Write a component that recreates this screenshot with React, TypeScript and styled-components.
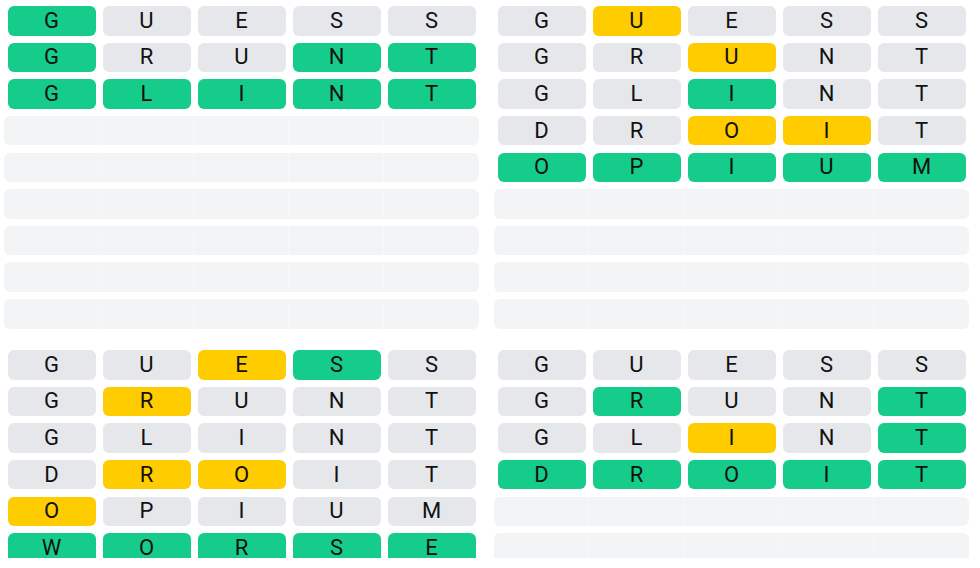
import React from "react";
import styled, { createGlobalStyle } from "styled-components";

const GlobalStyle = createGlobalStyle`
  html, body { margin: 0; padding: 0; background: #ffffff; }
  body { font-family: Roboto, "Noto Sans", Arial, sans-serif; }
`;

type State = "g" | "y" | "x";

const COLORS: Record<State, string> = {
  g: "#15cc8a",
  y: "#ffcc00",
  x: "#e5e7eb",
};

const Viewport = styled.div`
  height: 558px;
  overflow: hidden;
`;

const Boards = styled.div`
  display: grid;
  grid-template-columns: 475px 475px;
  column-gap: 15px;
  row-gap: 21.5px;
  padding: 6px 0 0 4px;
`;

const Board = styled.div`
  display: flex;
  flex-direction: column;
  gap: 7.125px;
`;

const Row = styled.div`
  display: grid;
  grid-template-columns: repeat(5, 95px);
  height: 29.5px;
`;

const Tile = styled.div<{ $state: State }>`
  margin: 0 3.5px;
  border-radius: 6px;
  background: ${(p) => COLORS[p.$state]};
  display: flex;
  align-items: center;
  justify-content: center;
  font-family: Roboto, "Noto Sans", Arial, sans-serif;
  font-size: 22px;
  font-weight: 400;
  color: #111111;
  line-height: 1;
`;

const EmptyRow = styled.div`
  display: grid;
  grid-template-columns: repeat(5, 1fr);
  height: 29.5px;
  border-radius: 6px;
  overflow: hidden;
  background: #f3f4f6;
`;

const EmptyCell = styled.div`
  &:not(:last-child) {
    border-right: 1px solid #f7f8f9;
  }
`;

type Guess = { word: string; states: string };

const boards: Guess[][] = [
  [
    { word: "GUESS", states: "gxxxx" },
    { word: "GRUNT", states: "gxxgg" },
    { word: "GLINT", states: "ggggg" },
  ],
  [
    { word: "GUESS", states: "xyxxx" },
    { word: "GRUNT", states: "xxyxx" },
    { word: "GLINT", states: "xxgxx" },
    { word: "DROIT", states: "xxyyx" },
    { word: "OPIUM", states: "ggggg" },
  ],
  [
    { word: "GUESS", states: "xxygx" },
    { word: "GRUNT", states: "xyxxx" },
    { word: "GLINT", states: "xxxxx" },
    { word: "DROIT", states: "xyyxx" },
    { word: "OPIUM", states: "yxxxx" },
    { word: "WORSE", states: "ggggg" },
  ],
  [
    { word: "GUESS", states: "xxxxx" },
    { word: "GRUNT", states: "xgxxg" },
    { word: "GLINT", states: "xxyxg" },
    { word: "DROIT", states: "ggggg" },
  ],
];

const TOTAL_ROWS = 9;

export default function App() {
  return (
    <>
      <GlobalStyle />
      <Viewport>
        <Boards>
          {boards.map((guesses, bi) => (
            <Board key={bi}>
              {guesses.map((g, ri) => (
                <Row key={ri}>
                  {g.word.split("").map((ch, ci) => (
                    <Tile key={ci} $state={g.states[ci] as State}>
                      {ch}
                    </Tile>
                  ))}
                </Row>
              ))}
              {Array.from({ length: TOTAL_ROWS - guesses.length }).map((_, ei) => (
                <EmptyRow key={`e${ei}`}>
                  {Array.from({ length: 5 }).map((__, ci) => (
                    <EmptyCell key={ci} />
                  ))}
                </EmptyRow>
              ))}
            </Board>
          ))}
        </Boards>
      </Viewport>
    </>
  );
}
